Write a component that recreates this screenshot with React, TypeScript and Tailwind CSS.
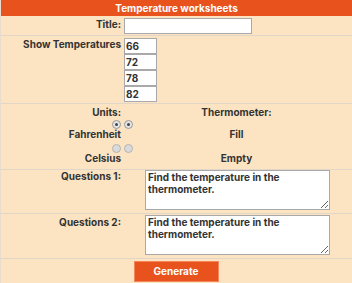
import React from 'react';

const Radio = ({ checked }: { checked?: boolean }) => (
  <span
    className={`flex items-center justify-center w-[9px] h-[9px] rounded-full border ${
      checked ? 'border-[#9a9a9a] bg-[#e4e4e4]' : 'border-[#b4b4b4] bg-[#dadada]'
    }`}
  >
    {checked && <span className="w-[3px] h-[3px] rounded-full bg-[#444]" />}
  </span>
);

const QUESTION = 'Find the temperature in the thermometer.';

export default function App() {
  const temps = ['66', '72', '78', '82'];

  return (
    <div
      className="w-[352px] h-[283px] overflow-hidden bg-[#fce3c2] border-l border-[#eadccc] text-[10px] font-bold text-[#333]"
      style={{ fontFamily: 'Inter, "Liberation Sans", sans-serif' }}
    >
      {/* header */}
      <div className="h-[16px] leading-[16px] bg-[#e8531d] text-white text-center">Temperature worksheets</div>

      {/* title */}
      <div className="flex pt-[2px] pb-px border-b border-[#e2d6c8]">
        <div className="w-[120px] text-right leading-[12px]">Title:</div>
        <input className="ml-[3px] w-[128px] h-[16px] bg-white border border-[#a9a9a9] outline-none" />
      </div>

      {/* temperatures */}
      <div className="flex pt-[2px] pb-px border-b border-[#e2d6c8]">
        <div className="w-[120px] text-right leading-[12px] whitespace-nowrap">Show Temperatures</div>
        <div className="ml-[3px] flex flex-col">
          {temps.map((t) => (
            <input
              key={t}
              defaultValue={t}
              className="w-[33px] h-[16px] bg-white border border-[#a9a9a9] px-px leading-[14px] font-bold text-[#333] outline-none"
            />
          ))}
        </div>
      </div>

      {/* units / thermometer */}
      <div className="flex h-[66px] border-b border-[#e2d6c8]">
        <div className="w-[120px] flex flex-col items-end">
          <div className="mt-[2px] leading-[12px]">Units:</div>
          <div className="mt-px h-[10px] flex items-center gap-[3px] mr-[-12px]">
            <Radio checked />
            <Radio checked />
          </div>
          <div className="h-[10px] leading-[10px]">Fahrenheit</div>
          <div className="mt-[4px] h-[10px] flex items-center gap-[3px] mr-[-12px]">
            <Radio />
            <Radio />
          </div>
          <div className="h-[10px] leading-[10px]">Celsius</div>
        </div>
        <div className="flex-1 flex flex-col items-center">
          <div className="mt-[2px] leading-[12px]">Thermometer:</div>
          <div className="mt-px h-[10px]" />
          <div className="h-[10px] leading-[10px]">Fill</div>
          <div className="mt-[4px] h-[10px]" />
          <div className="h-[10px] leading-[10px]">Empty</div>
        </div>
      </div>

      {/* question 1 */}
      <div className="flex h-[44px] border-b border-[#e2d6c8]">
        <div className="w-[120px] text-right leading-[12px]">Questions 1:</div>
        <textarea
          defaultValue={QUESTION}
          className="ml-[24px] w-[185px] h-[40px] bg-white border border-[#a9a9a9] px-[2px] py-0 leading-[12px] font-bold text-[#333] outline-none"
        />
      </div>

      {/* question 2 */}
      <div className="flex h-[45px] border-b border-[#e2d6c8]">
        <div className="w-[120px] mt-[2px] text-right leading-[12px]">Questions 2:</div>
        <textarea
          defaultValue={QUESTION}
          className="ml-[24px] mt-px w-[185px] h-[40px] bg-white border border-[#a9a9a9] px-[2px] py-0 leading-[12px] font-bold text-[#333] outline-none"
        />
      </div>

      {/* generate */}
      <div className="flex justify-center pt-[2px]">
        <button className="ml-[-1px] w-[85px] h-[21px] bg-[#e8531d] border border-[#f3865a] text-white font-bold">
          Generate
        </button>
      </div>
    </div>
  );
}
